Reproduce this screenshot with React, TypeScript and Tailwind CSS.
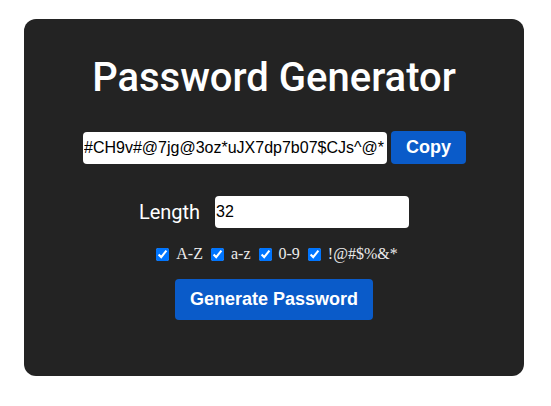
import { useState } from 'react'

const OPTIONS = ['A-Z', 'a-z', '0-9', '!@#$%&*']

export default function App() {
  const [password] = useState('#CH9v#@7jg@3oz*uJX7dp7b07$CJs^@*')
  const [length, setLength] = useState('32')

  return (
    <div className="min-h-[406px] bg-white pt-[19px] pl-[24px]">
      <div className="flex w-[500px] flex-col items-center rounded-[12px] bg-[#232323] pt-[35px] pb-[56px]">
        <h1 className="font-['Roboto',sans-serif] text-[40px] leading-[48px] font-medium text-white">
          Password Generator
        </h1>

        <div className="mt-[29px] flex items-center gap-[4px] pl-[1px]">
          <input
            type="text"
            readOnly
            value={password}
            className="h-[32px] w-[304px] rounded-[4px] bg-white px-[1px] font-['Liberation_Sans',Arial,sans-serif] text-[16px] text-black outline-none"
          />
          <button
            type="button"
            className="h-[33px] rounded-[4px] bg-[#0a5bc9] px-[15px] font-['Liberation_Sans',Arial,sans-serif] text-[18px] font-bold text-white"
          >
            Copy
          </button>
        </div>

        <div className="mt-[32px] flex items-center gap-[15px]">
          <label className="font-['Roboto',sans-serif] text-[20px] text-white">
            Length
          </label>
          <input
            type="number"
            value={length}
            onChange={(e) => setLength(e.target.value)}
            className="h-[32px] w-[194px] rounded-[4px] bg-white px-[1px] font-['Liberation_Sans',Arial,sans-serif] text-[16px] text-black outline-none [appearance:textfield]"
          />
        </div>

        <div className="mt-[16px] flex h-[20px] items-center pl-[6px] font-['Liberation_Serif','Times_New_Roman',serif] text-[16px] text-[#ececec]">
          {OPTIONS.map((opt) => (
            <label key={opt} className="flex items-center">
              <input
                type="checkbox"
                defaultChecked
                className="mt-[3px] mr-[7px] mb-[3px] ml-[4px] h-[13px] w-[13px] accent-[#0075ff]"
              />
              <span className="mr-[4px]">{opt}</span>
            </label>
          ))}
        </div>

        <button
          type="button"
          className="mt-[15px] h-[41px] rounded-[4px] bg-[#0a5bc9] px-[15px] font-['Liberation_Sans',Arial,sans-serif] text-[18px] font-bold text-white"
        >
          Generate Password
        </button>
      </div>
    </div>
  )
}
